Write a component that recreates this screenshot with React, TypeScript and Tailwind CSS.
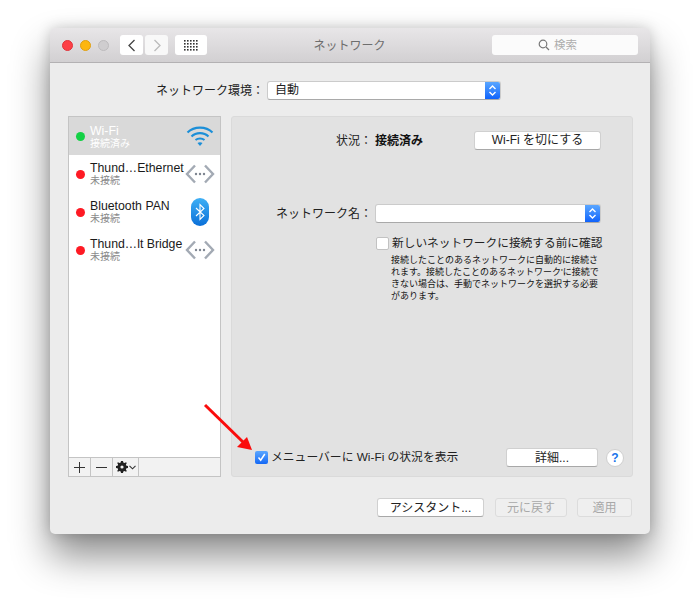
import React from "react";

const FONT = "[font-family:'Liberation_Sans','Noto_Sans_CJK_JP',sans-serif]";

function Stepper({ className }: { className: string }) {
  return (
    <span className={`flex items-center justify-center bg-gradient-to-b from-[#5aa6ff] to-[#0f62fb] ${className}`}>
      <svg width="9" height="13" viewBox="0 0 9 13" fill="none" stroke="#fff" strokeWidth="1.4">
        <path d="M1.5 5 L4.5 2 L7.5 5" />
        <path d="M1.5 8 L4.5 11 L7.5 8" />
      </svg>
    </span>
  );
}

function Btn({ children, className, off }: { children: React.ReactNode; className: string; off?: boolean }) {
  return (
    <div
      className={`flex items-center justify-center rounded-[3px] text-[12px] leading-none ${
        off
          ? "bg-[#efefef] text-[#a8a8a8] border border-[#dcdcdc]"
          : "bg-white text-[#222] border border-[#d0d0d0] border-b-[#a8a8a8]"
      } ${className}`}
    >
      {children}
    </div>
  );
}

function Dot({ color }: { color: string }) {
  return <span className={`h-[9px] w-[9px] shrink-0 rounded-full ${color}`} />;
}

function Link() {
  return (
    <svg width="30" height="20" viewBox="0 0 30 20" fill="none">
      <path d="M10 1.5 L2 10 L10 18.5" stroke="#a3aab4" strokeWidth="2.4" />
      <path d="M20 1.5 L28 10 L20 18.5" stroke="#a3aab4" strokeWidth="2.4" />
      <circle cx="11" cy="10" r="1.2" fill="#7d8590" />
      <circle cx="15" cy="10" r="1.2" fill="#7d8590" />
      <circle cx="19" cy="10" r="1.2" fill="#7d8590" />
    </svg>
  );
}

function Row({ name, icon }: { name: string; icon: React.ReactNode }) {
  return (
    <div className="flex h-[38px] items-center bg-white pl-[2px]">
      <span className="ml-[5px] mr-[5px] flex"><Dot color="bg-[#fe1a24]" /></span>
      <div className="w-[95px] shrink-0 whitespace-nowrap">
        <div className="text-[12.3px] leading-[14px] text-[#1a1a1a]">{name}</div>
        <div className="text-[10px] leading-[12px] text-[#8a8a8a]">未接続</div>
      </div>
      <div className="ml-[-3px] flex flex-1 justify-center pr-[3px]">{icon}</div>
    </div>
  );
}

export default function App() {
  return (
    <div className={`relative h-[606px] w-[700px] overflow-hidden bg-white pl-[50px] pt-[28px] ${FONT}`}>
      <div className="flex h-[506px] w-[600px] flex-col overflow-hidden rounded-[5px] bg-[#ececec] shadow-[0_22px_38px_rgba(0,0,0,0.45),0_0_14px_rgba(0,0,0,0.18)]">
        {/* title bar */}
        <div className="relative flex h-[35px] shrink-0 items-center border-b border-[#b3b1b3] bg-gradient-to-b from-[#e8e6e8] to-[#d2d0d2] pl-[12px] pr-[12px]">
          <span className="h-[11px] w-[11px] rounded-full border border-[#e0333a] bg-[#fd3f46]" />
          <span className="ml-[7px] h-[11px] w-[11px] rounded-full border border-[#e0a010] bg-[#fdb60f]" />
          <span className="ml-[7px] h-[11px] w-[11px] rounded-full border border-[#bdbbbd] bg-[#cfcdcf]" />
          <div className="ml-[11px] flex h-[20px] w-[23px] items-center justify-center rounded-[3px] bg-white">
            <svg width="10" height="13" viewBox="0 0 10 13" fill="none" stroke="#444" strokeWidth="1.3"><path d="M7.5 1 L2 6.5 L7.5 12" /></svg>
          </div>
          <div className="ml-[2px] flex h-[20px] w-[23px] items-center justify-center rounded-[3px] bg-[#f8f8f8]">
            <svg width="10" height="13" viewBox="0 0 10 13" fill="none" stroke="#bbb" strokeWidth="1.3"><path d="M2.5 1 L8 6.5 L2.5 12" /></svg>
          </div>
          <div className="ml-[7px] flex h-[20px] w-[32px] items-center justify-center rounded-[3px] bg-white">
            <svg width="14" height="11" viewBox="0 0 14 11" fill="#333">
              {[0, 1, 2, 3].map((r) =>
                [0, 1, 2, 3, 4].map((c) => <rect key={`${r}${c}`} x={c * 3} y={r * 3} width="1.6" height="1.6" />),
              )}
            </svg>
          </div>
          <span className="mt-[2px] flex-1 text-center text-[12px] text-[#6e6e6e]">ネットワーク</span>
          <div className="flex h-[20px] w-[146px] items-center justify-center gap-[4px] rounded-[3px] bg-[#fbfbfb] pr-[15px] text-[11.5px] text-[#adadad]">
            <svg width="12" height="12" viewBox="0 0 12 12" fill="none" stroke="#777" strokeWidth="1.2">
              <circle cx="5" cy="5" r="3.8" />
              <path d="M8 8 L11 11" />
            </svg>
            <span className="mt-[2px]">検索</span>
          </div>
        </div>

        {/* location */}
        <div className="mt-[18px] flex h-[19px] shrink-0 items-center pl-[106px]">
          <span className="w-[111px] whitespace-nowrap text-[12px] text-[#222]">ネットワーク環境：</span>
          <div className="flex h-[19px] w-[234px] overflow-hidden rounded-[3px] border border-[#cbcbcb] border-b-[#a9a9a9] bg-white">
            <span className="flex-1 pl-[7px] text-[12px] leading-[17px] text-[#222]">自動</span>
            <Stepper className="w-[15px]" />
          </div>
        </div>

        {/* body */}
        <div className="mt-[16px] flex shrink-0 pl-[18px]">
          {/* list */}
          <div className="flex h-[361px] w-[153px] flex-col border border-[#c4c4c4] bg-white">
            <div className="flex h-[38px] items-center bg-[#d9d9d9] pl-[2px]">
              <span className="ml-[5px] mr-[5px] flex"><Dot color="bg-[#13d145]" /></span>
              <div className="w-[95px] shrink-0 pt-[1px]">
                <div className="text-[12.3px] font-normal leading-[14px] text-white">Wi-Fi</div>
                <div className="text-[10px] leading-[12px] text-white">接続済み</div>
              </div>
              <div className="ml-[-3px] flex flex-1 justify-center pr-[3px]">
                <svg width="28" height="22" viewBox="0 0 28 22" fill="none" stroke="#1c8fd8" strokeWidth="2.1">
                  <path d="M1.5 7.5 C8 1 20 1 26.5 7.5" />
                  <path d="M5.5 11.5 C10 7 18 7 22.5 11.5" />
                  <path d="M9.5 15 C12 13 16 13 18.5 15" />
                  <path d="M11.5 18 L14 21 L16.5 18 C15 17 13 17 11.5 18 Z" fill="#1c8fd8" stroke="none" />
                </svg>
              </div>
            </div>
            <Row name="Thund…Ethernet" icon={<Link />} />
            <Row
              name="Bluetooth PAN"
              icon={
                <span className="flex h-[28px] w-[18px] items-center justify-center rounded-[9px] bg-gradient-to-b from-[#3fb0f5] to-[#0a6fd8]">
                  <svg width="10" height="18" viewBox="0 0 10 18" fill="none" stroke="#fff" strokeWidth="1.1">
                    <path d="M1 5 L9 12.5 L5 16.5 V1.5 L9 5.5 L1 13" />
                  </svg>
                </span>
              }
            />
            <Row name="Thund…lt Bridge" icon={<Link />} />
            <div className="flex-1" />
            <div className="flex h-[19px] shrink-0 border-t border-[#c4c4c4] bg-[#f2f2f2] text-[#333]">
              <div className="flex w-[22px] items-center justify-center border-r border-[#c4c4c4]">
                <svg width="11" height="11" viewBox="0 0 11 11" stroke="#333" strokeWidth="1"><path d="M5.5 0 V11 M0 5.5 H11" /></svg>
              </div>
              <div className="flex w-[22px] items-center justify-center border-r border-[#c4c4c4]">
                <svg width="11" height="11" viewBox="0 0 11 11" stroke="#333" strokeWidth="1"><path d="M0 5.5 H11" /></svg>
              </div>
              <div className="flex w-[26px] items-center justify-center gap-[1px] border-r border-[#c4c4c4]">
                <svg width="12" height="12" viewBox="0 0 12 12" fill="#222">
                  <path fillRule="evenodd" d="M5 0 H7 L7.3 1.6 L8.6 2.1 L10 1.2 L10.8 2 L9.9 3.4 L10.4 4.7 L12 5 V7 L10.4 7.3 L9.9 8.6 L10.8 10 L10 10.8 L8.6 9.9 L7.3 10.4 L7 12 H5 L4.7 10.4 L3.4 9.9 L2 10.8 L1.2 10 L2.1 8.6 L1.6 7.3 L0 7 V5 L1.6 4.7 L2.1 3.4 L1.2 2 L2 1.2 L3.4 2.1 L4.7 1.6 Z M6 4.4 A1.6 1.6 0 1 0 6 7.6 A1.6 1.6 0 1 0 6 4.4 Z" />
                </svg>
                <svg width="7" height="5" viewBox="0 0 7 5" fill="none" stroke="#333" strokeWidth="1.1"><path d="M0.5 0.8 L3.5 3.8 L6.5 0.8" /></svg>
              </div>
            </div>
          </div>

          {/* panel */}
          <div className="ml-[10px] flex h-[361px] w-[402px] flex-col rounded-[3px] border border-[#dadada] bg-[#e2e2e2]">
            <div className="mt-[14px] flex h-[18px] items-center">
              <span className="w-[140px] pt-[1px] text-right text-[12px] text-[#222]">状況：</span>
              <span className="ml-[3px] w-[99px] pt-[1px] text-[12px] font-bold text-[#111]">接続済み</span>
              <Btn className="h-[19px] w-[127px]">Wi-Fi を切にする</Btn>
            </div>
            <div className="mt-[55px] flex h-[19px] items-center">
              <span className="w-[140px] whitespace-nowrap text-right text-[12px] text-[#222]">ネットワーク名：</span>
              <div className="ml-[3px] flex h-[19px] w-[226px] overflow-hidden rounded-[3px] border border-[#cbcbcb] border-b-[#a9a9a9] bg-white">
                <span className="flex-1" />
                <Stepper className="w-[15px]" />
              </div>
            </div>
            <div className="ml-[144px] mt-[12px] flex h-[16px] items-center">
              <span className="h-[13px] w-[13px] rounded-[2px] border border-[#c2c2c2] bg-white" />
              <span className="ml-[3px] whitespace-nowrap text-[11.7px] text-[#222]">新しいネットワークに接続する前に確認</span>
            </div>
            <div className="ml-[159px] mt-[3px] whitespace-nowrap text-[9px] leading-[12px] text-[#111]">
              <p>接続したことのあるネットワークに自動的に接続さ</p>
              <p>れます。接続したことのあるネットワーク'に接続で</p>
              <p>きない場合は、手動でネットワークを選択する必要</p>
              <p>があります。</p>
            </div>
            <div className="flex-1" />
            <div className="mb-[9px] flex h-[19px] items-center pl-[23px]">
              <span className="flex h-[13px] w-[13px] items-center justify-center rounded-[2px] bg-gradient-to-b from-[#5aa6ff] to-[#1468f5]">
                <svg width="9" height="9" viewBox="0 0 9 9" fill="none" stroke="#fff" strokeWidth="1.5"><path d="M1.5 4.5 L3.7 7.2 L7.8 1" /></svg>
              </span>
              <span className="ml-[3px] w-[235px] whitespace-nowrap text-[11.8px] text-[#222]">メニューバーに Wi-Fi の状況を表示</span>
              <Btn className="h-[19px] w-[92px]">詳細...</Btn>
              <span className="ml-[8px] flex h-[18px] w-[18px] items-center justify-center rounded-full border border-[#cfcfcf] bg-white text-[12px] font-bold text-[#1a73ea]">?</span>
            </div>
          </div>
        </div>

        {/* footer */}
        <div className="mt-[21px] flex h-[19px] shrink-0 pl-[327px]">
          <Btn className="h-[19px] w-[107px]">アシスタント...</Btn>
          <Btn off className="ml-[11px] h-[19px] w-[72px]">元に戻す</Btn>
          <Btn off className="ml-[10px] h-[19px] w-[55px]">適用</Btn>
        </div>
      </div>

      {/* annotation arrow */}
      <svg className="absolute left-[200px] top-[400px]" width="60" height="60" viewBox="0 0 60 60" fill="none">
        <path d="M5 5 L44 43" stroke="#fa0c0c" strokeWidth="3" />
        <path d="M52 50 L37 47 L47 37 Z" fill="#fa0c0c" />
      </svg>
    </div>
  );
}
